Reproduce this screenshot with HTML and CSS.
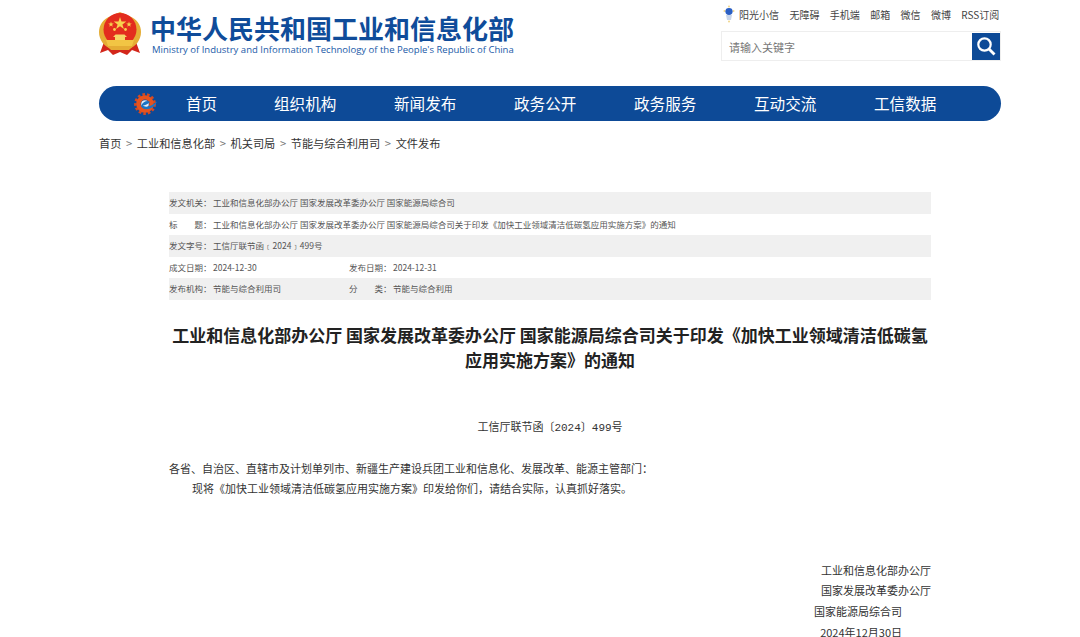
FILE: index.html
```html
<!DOCTYPE html>
<html lang="zh-CN">
<head>
    <meta charset="UTF-8">
    <meta name="viewport" content="width=device-width, initial-scale=1.0">
    <title>工业和信息化部办公厅 国家发展改革委办公厅 国家能源局综合司关于印发《加快工业领域清洁低碳氢应用实施方案》的通知</title>
    <link rel="stylesheet" href="styles.css">
</head>
<body>
    <div class="wrap">
        <header class="top">
            <div class="logo">
                <svg class="emblem" width="42" height="45" viewBox="0 0 42 45">
                    <path d="M5 31 L1 42 L9 39 L14 44 L21 41 L28 44 L33 39 L41 42 L37 31 Z" fill="#d3271b"/>
                    <path d="M12 5 C4 8 0 14 0 21 C0 29 5 35 12 38 H30 C37 35 42 29 42 21 C42 14 38 8 30 5 L21 1 Z" fill="#e5ad35"/>
                    <circle cx="21" cy="18.5" r="16.5" fill="#e32c1e"/>
                    <polygon points="21,6 22.5,10.6 27.3,10.6 23.4,13.4 24.9,18 21,15.2 17.1,18 18.6,13.4 14.7,10.6 19.5,10.6" fill="#f7d24f"/>
                    <polygon points="12,10.5 12.7,12.5 14.8,12.5 13.1,13.7 13.7,15.7 12,14.5 10.3,15.7 10.9,13.7 9.2,12.5 11.3,12.5" fill="#f7d24f"/>
                    <polygon points="30,10.5 30.7,12.5 32.8,12.5 31.1,13.7 31.7,15.7 30,14.5 28.3,15.7 28.9,13.7 27.2,12.5 29.3,12.5" fill="#f7d24f"/>
                    <circle cx="15.5" cy="18.5" r="1.4" fill="#f7d24f"/>
                    <circle cx="26.5" cy="18.5" r="1.4" fill="#f7d24f"/>
                    <path d="M14 26 L16.5 23.5 H25.5 L28 26 H26 V29 H16 V26 Z" fill="#f6d566"/>
                    <path d="M7 29 H35 L33 35 H9 Z" fill="#f2c544"/>
                    <path d="M9 36 H33 L30 39 H12 Z" fill="#e5ad35"/>
                </svg>
                <div class="logo-text">
                    <div class="logo-cn">中华人民共和国工业和信息化部</div>
                    <div class="logo-en">Ministry of Industry and Information Technology of the People's Republic of China</div>
                </div>
            </div>
            <div class="top-right">
                <div class="top-links">
                    <svg class="sun-icon" width="12" height="18" viewBox="0 0 12 18">
                        <circle cx="6" cy="1.5" r="1" fill="#f0d68a"/>
                        <circle cx="1.5" cy="6" r="1" fill="#f0d68a"/>
                        <circle cx="10.5" cy="6" r="1" fill="#f0d68a"/>
                        <ellipse cx="6" cy="6.5" rx="3.6" ry="3.4" fill="#2a5fc4"/>
                        <path d="M3 10 H9 L8 15 H4 Z" fill="#c9d6ea"/>
                        <circle cx="6" cy="16.5" r="1" fill="#f0d68a"/>
                    </svg>
                    <a>阳光小信</a>
                    <a>无障碍</a>
                    <a>手机端</a>
                    <a>邮箱</a>
                    <a>微信</a>
                    <a>微博</a>
                    <a>RSS订阅</a>
                </div>
                <div class="search">
                    <span class="search-text">请输入关键字</span>
                    <button class="search-btn" type="button">
                        <svg width="20" height="20" viewBox="0 0 20 20" fill="none" stroke="#fff">
                            <circle cx="8.5" cy="8.5" r="6.2" stroke-width="2.2"/>
                            <path d="M13 13 L18.5 18.5" stroke-width="2.8"/>
                        </svg>
                    </button>
                </div>
            </div>
        </header>

        <nav class="nav">
            <svg class="nav-logo" width="24" height="24" viewBox="0 0 24 24">
                <circle cx="11" cy="12" r="9.6" fill="none" stroke="#d8491f" stroke-width="2.6" stroke-dasharray="2.6 2.1"/>
                <circle cx="11" cy="12" r="6.6" fill="none" stroke="#e8531d" stroke-width="4.4"/>
                <circle cx="11" cy="12" r="3.8" fill="#eaf0f7"/>
                <path d="M7 14 C9 9 14 8 16 10 C14 12.5 11 13 9 13.6 C11 15.6 17 15 23 9.5 C20 17 10 20 7 14 Z" fill="#1c74c4"/>
            </svg>
            <a class="nav-home">首页</a>
            <a>组织机构</a>
            <a>新闻发布</a>
            <a>政务公开</a>
            <a>政务服务</a>
            <a>互动交流</a>
            <a>工信数据</a>
        </nav>

        <div class="crumbs">
            <a>首页</a><i>&gt;</i><a>工业和信息化部</a><i>&gt;</i><a>机关司局</a><i>&gt;</i><a>节能与综合利用司</a><i>&gt;</i><a>文件发布</a>
        </div>

        <main class="article">
            <div class="meta">
                <div class="meta-row"><span class="meta-label">发文机关：</span><span>工业和信息化部办公厅 国家发展改革委办公厅 国家能源局综合司</span></div>
                <div class="meta-row"><span class="meta-label">标　　题：</span><span>工业和信息化部办公厅 国家发展改革委办公厅 国家能源局综合司关于印发《加快工业领域清洁低碳氢应用实施方案》的通知</span></div>
                <div class="meta-row"><span class="meta-label">发文字号：</span><span>工信厅联节函﹝2024﹞499号</span></div>
                <div class="meta-row">
                    <div class="meta-cell"><span class="meta-label">成文日期：</span><span>2024-12-30</span></div>
                    <div class="meta-cell"><span class="meta-label">发布日期：</span><span>2024-12-31</span></div>
                </div>
                <div class="meta-row">
                    <div class="meta-cell"><span class="meta-label">发布机构：</span><span>节能与综合利用司</span></div>
                    <div class="meta-cell"><span class="meta-label">分　　类：</span><span>节能与综合利用</span></div>
                </div>
            </div>

            <h1 class="title">工业和信息化部办公厅 国家发展改革委办公厅 国家能源局综合司关于印发《加快工业领域清洁低碳氢应用实施方案》的通知</h1>

            <p class="doc-no">工信厅联节函〔2024〕499号</p>

            <p class="body-line">各省、自治区、直辖市及计划单列市、新疆生产建设兵团工业和信息化、发展改革、能源主管部门：</p>
            <p class="body-line indent">现将《加快工业领域清洁低碳氢应用实施方案》印发给你们，请结合实际，认真抓好落实。</p>

            <div class="sign">
                <p>工业和信息化部办公厅</p>
                <p>国家发展改革委办公厅</p>
                <p class="sign-short">国家能源局综合司</p>
                <p class="sign-short">2024年12月30日</p>
            </div>
        </main>
    </div>
</body>
</html>
```

FILE: styles.css
```css
html, body {
    height: 637px;
    overflow: hidden;
}
body {
    margin: 0;
    background-color: #fff;
    color: #333;
    font-family: "Noto Sans CJK SC", "Liberation Sans", sans-serif;
}
p, h1 {
    margin: 0;
}
.wrap {
    width: 902px;
    margin-left: 99px;
}

/* cabecera */
.top {
    display: flex;
    justify-content: space-between;
    height: 86px;
}
.logo {
    display: flex;
    align-items: flex-start;
    padding-top: 11px;
}
.emblem {
    display: block;
    margin-right: 9px;
}
.logo-text {
    width: 366px;
}
.logo-cn {
    font-size: 26px;
    line-height: 30px;
    margin-top: 2px;
    font-weight: 700;
    color: #0f4c9a;
    white-space: nowrap;
}
.logo-en {
    font-family: "Open Sans", sans-serif;
    font-size: 9.52px;
    line-height: 13px;
    margin-left: 2px;
    color: #1a5aa8;
    white-space: nowrap;
}
.top-right {
    width: 280px;
}
.top-links {
    display: flex;
    align-items: center;
    height: 18px;
    margin-top: 5px;
    padding-left: 2px;
    font-size: 10px;
    color: #444;
    white-space: nowrap;
}
.sun-icon {
    margin-right: 4px;
}
.top-links a {
    margin-right: 10.4px;
}
.top-links a:last-child {
    margin-right: 0;
}
.search {
    display: flex;
    justify-content: space-between;
    align-items: center;
    box-sizing: border-box;
    width: 280px;
    height: 30px;
    margin-top: 8px;
    padding: 0 0 0 1px;
    border: 1px solid #eee;
}
.search-text {
    padding-left: 6px;
    padding-top: 1px;
    font-size: 11px;
    color: #777;
}
.search-btn {
    display: flex;
    align-items: center;
    justify-content: center;
    width: 28px;
    height: 27px;
    padding: 0;
    border: none;
    background-color: #0d4a97;
}

/* menu */
.nav {
    display: flex;
    align-items: center;
    height: 35px;
    border-radius: 18px;
    background-color: #0d4a97;
}
.nav-logo {
    margin-left: 35px;
    margin-right: 28px;
}
.nav a {
    width: 120px;
    font-size: 15.6px;
    line-height: 35px;
    color: #fff;
    white-space: nowrap;
}
.nav .nav-home {
    width: 88px;
}

.crumbs {
    display: flex;
    align-items: center;
    height: 18px;
    margin-top: 13px;
    font-size: 11.2px;
    color: #333;
}
.crumbs i {
    margin: 0 4.6px;
    font-style: normal;
    color: #777;
}

/* articulo */
.article {
    width: 762px;
    margin-left: 70px;
    margin-top: 40px;
}
.meta {
    font-size: 8.5px;
    color: #555;
}
.meta-row {
    display: flex;
    align-items: center;
    box-sizing: border-box;
    height: 21.5px;
    padding-bottom: 1px;
    white-space: nowrap;
}
.meta-row:nth-child(odd) {
    background-color: #f0f0f0;
}
.meta-label {
    display: inline-block;
    width: 44px;
}
.meta-cell {
    width: 180px;
}
.title {
    margin-top: 22px;
    font-size: 17px;
    line-height: 25px;
    font-weight: 700;
    color: #222;
    text-align: center;
}
.doc-no {
    margin-top: 48px;
    font-family: "Liberation Mono", "Noto Sans CJK SC", monospace;
    font-size: 11px;
    line-height: 16px;
    text-align: center;
}
.body-line {
    font-size: 11px;
    line-height: 20px;
}
.doc-no + .body-line {
    margin-top: 22px;
}
.indent {
    text-indent: 23px;
}
.sign {
    margin-top: 62px;
    font-size: 11px;
    line-height: 20.7px;
    text-align: right;
}
.sign-short {
    padding-right: 29px;
}
```
